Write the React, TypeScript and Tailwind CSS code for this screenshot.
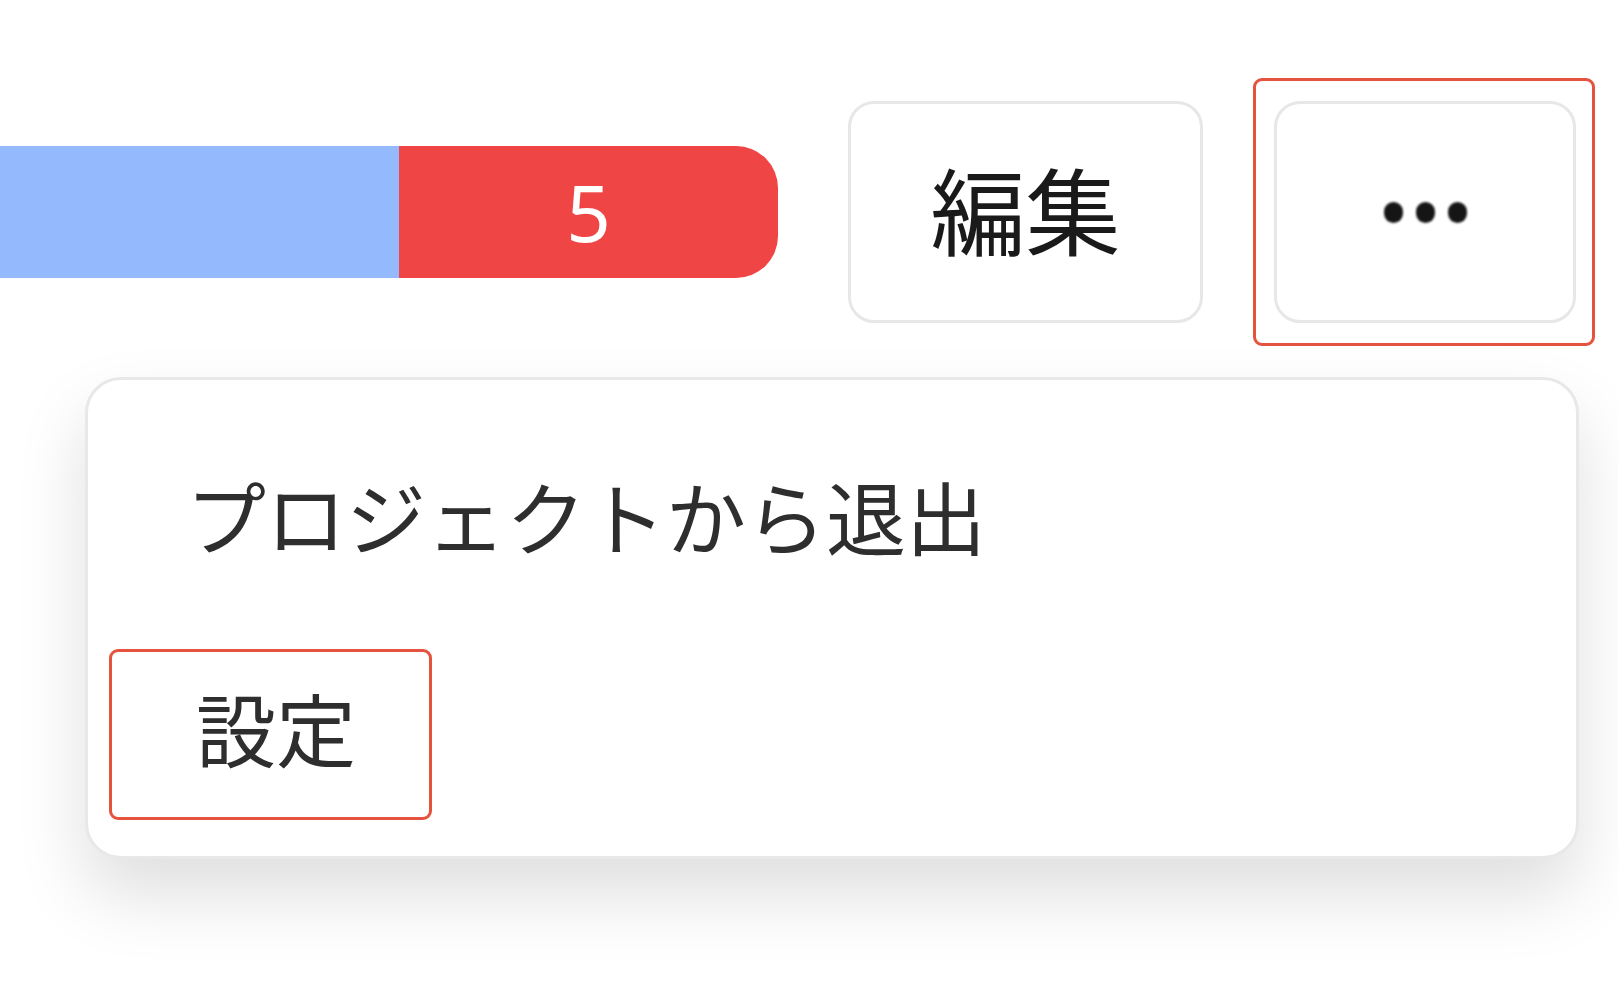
const font = { fontFamily: '"Noto Sans", "Noto Sans CJK JP", sans-serif' };

const Dots = () => (
  <div className="flex items-center gap-[13px]">
    <span className="block w-[19px] h-[21px] rounded-full bg-[#151515] blur-[1px]" />
    <span className="block w-[19px] h-[21px] rounded-full bg-[#151515] blur-[1px]" />
    <span className="block w-[19px] h-[21px] rounded-full bg-[#151515] blur-[1px]" />
  </div>
);

export default function App() {
  return (
    <div className="w-[1618px] h-[992px] bg-white overflow-hidden" style={font}>
      <div className="flex items-center pt-[78px]">
        {/* progress bar, left end runs off the page */}
        <div className="flex h-[132px] w-[778px] shrink-0">
          <div className="w-[399px] bg-[#94bafd]" />
          <div className="flex-1 flex items-center justify-center bg-[#ef4545] rounded-r-[42px] text-white text-[78px] leading-none">
            5
          </div>
        </div>

        <button className="ml-[70px] w-[355px] h-[222px] shrink-0 rounded-[26px] border-[3px] border-[#e7e7e7] bg-white flex items-center justify-center text-[95px] text-[#1a1a1a] leading-none">
          編集
        </button>

        <div className="ml-[50px] w-[342px] h-[268px] shrink-0 rounded-[9px] border-[3px] border-[#e5533f] pl-[18px] pt-[20px]">
          <button className="w-[302px] h-[222px] rounded-[26px] border-[3px] border-[#e7e7e7] bg-white flex items-center justify-center">
            <Dots />
          </button>
        </div>
      </div>

      <div className="ml-[85px] mt-[31px] w-[1494px] h-[482px] rounded-[36px] border-[3px] border-[#e8e8e8] bg-white shadow-[0_36px_70px_rgba(0,0,0,0.13)] pt-[52px] px-[21px] flex flex-col gap-[46px]">
        <div className="h-[171px] flex items-center pl-[77px] text-[80px] text-[#2e2e2e] leading-none">
          プロジェクトから退出
        </div>
        <div className="w-[323px] h-[171px] rounded-[9px] border-[3px] border-[#e5533f] flex items-center pl-[84px] pb-[10px] text-[80px] text-[#2e2e2e] leading-none">
          設定
        </div>
      </div>
    </div>
  );
}
